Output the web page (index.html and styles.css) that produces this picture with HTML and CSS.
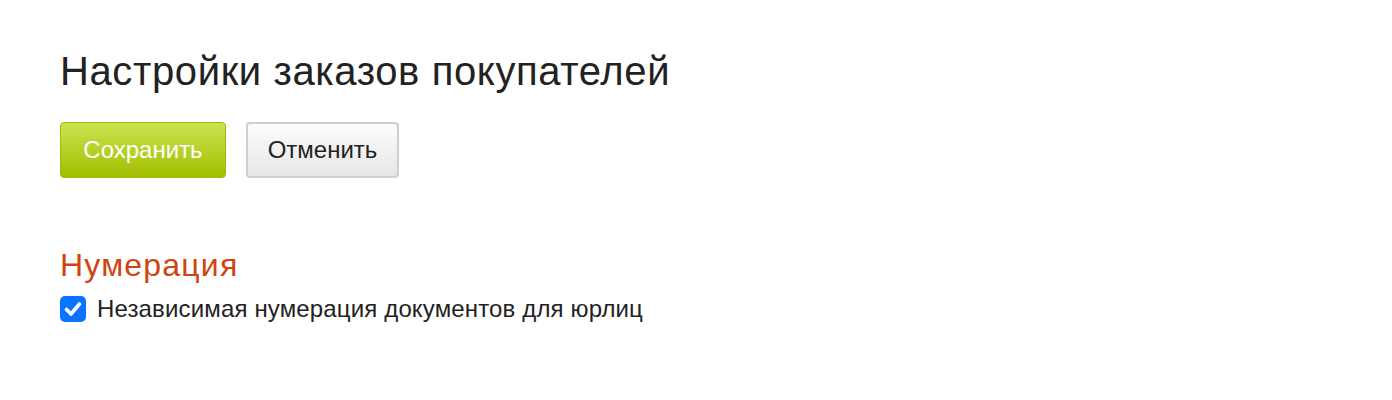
FILE: index.html
```
<!DOCTYPE html>
<html lang="ru">
<head>
<meta charset="utf-8">
<link rel="stylesheet" href="styles.css">
</head>
<body>
<div class="page">
  <h1 class="title">Настройки заказов покупателей</h1>
  <div class="actions">
    <button class="btn btn-save">Сохранить</button>
    <button class="btn btn-cancel">Отменить</button>
  </div>
  <h2 class="section">Нумерация</h2>
  <label class="check">
    <span class="box"><svg viewBox="0 0 26 26" width="26" height="26"><path d="M6.5 13.5 L11 18 L19.5 8" fill="none" stroke="#fff" stroke-width="3.6" stroke-linecap="round" stroke-linejoin="round"/></svg></span>
    <span class="check-label">Независимая нумерация документов для юрлиц</span>
  </label>
</div>
</body>
</html>
```
FILE: styles.css
```
html, body {
  margin: 0;
  padding: 0;
  background: #fff;
}
body {
  font-family: "Liberation Sans", Arial, sans-serif;
  color: #222;
}
.page {
  padding: 48px 60px 0 60px;
}
.title {
  margin: 0;
  font-size: 40px;
  letter-spacing: 0.62px;
  font-weight: normal;
  line-height: 46px;
  color: #222;
}
.actions {
  display: flex;
  gap: 20px;
  margin-top: 28px;
}
.btn {
  height: 56px;
  font-family: "Liberation Sans", Arial, sans-serif;
  font-size: 24px;
  border-radius: 4px;
  padding: 0;
  cursor: pointer;
}
.btn-save {
  width: 166px;
  color: #fff;
  border: 1px solid #9fbb0a;
  background: linear-gradient(#cbe350, #a2be00);
}
.btn-cancel {
  width: 153px;
  color: #222;
  border: 2px solid #cfcfcf;
  background: linear-gradient(#fdfdfd, #e6e6e6);
}
.section {
  margin: 68px 0 0 0;
  font-size: 32px;
  letter-spacing: 1.2px;
  line-height: 38px;
  font-weight: normal;
  color: #cf4410;
}
.check {
  display: flex;
  align-items: center;
  gap: 11px;
  margin-top: 11px;
  font-size: 24px;
  letter-spacing: 0.15px;
  line-height: 28px;
  color: #222;
}
.box {
  width: 26px;
  height: 26px;
  border-radius: 5px;
  background: #0b74fe;
  display: flex;
  flex: none;
}
.box svg {
  display: block;
}
```
